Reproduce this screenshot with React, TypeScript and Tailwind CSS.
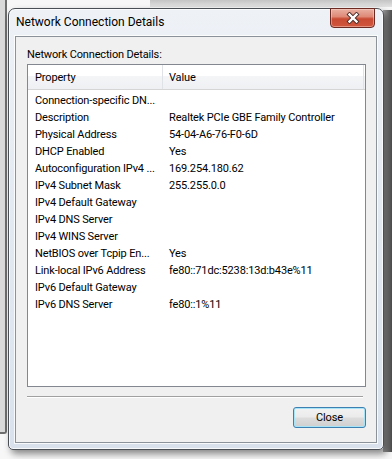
import React from "react";

const rows: [string, string][] = [
  ["Connection-specific DN...", ""],
  ["Description", "Realtek PCIe GBE Family Controller"],
  ["Physical Address", "54-04-A6-76-F0-6D"],
  ["DHCP Enabled", "Yes"],
  ["Autoconfiguration IPv4 ...", "169.254.180.62"],
  ["IPv4 Subnet Mask", "255.255.0.0"],
  ["IPv4 Default Gateway", ""],
  ["IPv4 DNS Server", ""],
  ["IPv4 WINS Server", ""],
  ["NetBIOS over Tcpip En...", "Yes"],
  ["Link-local IPv6 Address", "fe80::71dc:5238:13d:b43e%11"],
  ["IPv6 Default Gateway", ""],
  ["IPv6 DNS Server", "fe80::1%11"],
];

function CloseGlyph() {
  return (
    <svg width="14" height="12" viewBox="0 0 14 12">
      <path d="M3.5 2.5 L10.5 9.5 M10.5 2.5 L3.5 9.5" stroke="#4a2a26" strokeWidth="4.2" strokeLinecap="square" fill="none" />
      <path d="M3.5 2.5 L10.5 9.5 M10.5 2.5 L3.5 9.5" stroke="#ffffff" strokeWidth="2.4" strokeLinecap="square" fill="none" />
    </svg>
  );
}

export default function App() {
  return (
    <div className="relative h-[459px] w-[392px] overflow-hidden bg-[#f7f7f7] font-['Roboto',sans-serif] text-black">
      {/* desktop: parent window behind */}
      <div className="absolute left-0 top-0 h-[434px] w-[7px] rounded-br-[3px] border-r-2 border-b-2 border-[#6e6e6e] bg-[#dadada]" />
      <div className="absolute left-[150px] top-0 h-[7px] w-[242px] bg-gradient-to-b from-[#c4c4c4] to-[#e2e2e2]" />
      <div className="absolute right-0 top-[10px] h-[442px] w-[9px] bg-gradient-to-r from-[#a8a8a8] to-[#4c4c4c]" />

      {/* dialog window */}
      <div className="absolute left-[8px] top-[8px] flex h-[442px] w-[376px] flex-col rounded-t-[7px] rounded-b-[5px] border border-[#4a4f56] bg-gradient-to-b from-[#eef2f7] via-[#e3e9f1] to-[#d9e2ec] shadow-[inset_0_0_0_1px_rgba(255,255,255,0.75),3px_4px_7px_rgba(0,0,0,0.45)]">
        {/* title bar */}
        <div className="flex h-[27px] items-start justify-between">
          <div className="pl-[7px] pt-[6px] text-[12px] leading-[15px] text-black">Network Connection Details</div>
          <div className="-mt-[1px] mr-[8px] flex h-[20px] w-[45px] items-center justify-center rounded-b-[4px] border border-[#6d2a22] bg-[linear-gradient(to_bottom,#eab0a3_0%,#de8a77_42%,#c94a33_55%,#d0563c_100%)] shadow-[inset_0_0_0_1px_rgba(255,220,210,0.45)]">
            <CloseGlyph />
          </div>
        </div>

        {/* client area */}
        <div className="mx-[6px] mb-[6px] flex flex-1 flex-col border border-[#8b9299] bg-[#f0f0f0] shadow-[0_0_0_1px_rgba(255,255,255,0.8)]">
          <div className="ml-[11px] mt-[10px] h-[16px] text-[11px] leading-[16px] tracking-[-0.15px]">Network Connection Details:</div>

          {/* list view */}
          <div className="ml-[11px] mr-[10px] mt-[1px] flex h-[323px] flex-col border border-[#828790] bg-white text-[11px] tracking-[-0.15px]">
            <div className="flex h-[25px] border-b border-[#d5d5d5] bg-[linear-gradient(to_bottom,#ffffff_0%,#ffffff_45%,#f4f5f7_46%,#eff0f3_100%)]">
              <div className="flex w-[134px] items-center pl-[7px] pt-[1px] leading-[16px] text-[#000]">Property</div>
              <div className="w-px bg-[#dfe3e8]" />
              <div className="flex w-[201px] items-center border-r border-[#dfe3e8] pl-[6px] pt-[1px] leading-[16px] text-[#000]">Value</div>
            </div>
            <div className="flex flex-col pt-[2px]">
              {rows.map(([k, v]) => (
                <div key={k} className="flex h-[17px] leading-[17px]">
                  <div className="w-[135px] whitespace-nowrap pl-[7px]">{k}</div>
                  <div className="whitespace-nowrap pl-[6px]">{v}</div>
                </div>
              ))}
            </div>
          </div>

          {/* separator */}
          <div className="ml-[11px] mr-[13px] mt-[9px] h-[2px] border-t border-b border-t-[#a0a0a0] border-b-[#ffffff]" />

          {/* close button */}
          <div className="mr-[10px] mt-[9px] flex justify-end">
            <div className="flex h-[21px] w-[73px] items-center justify-center rounded-[3px] border border-[#3c7fb1] bg-[linear-gradient(to_bottom,#f2f2f2_0%,#ebebeb_48%,#dddddd_52%,#cfcfcf_100%)] text-[11px] leading-[16px] tracking-[-0.15px] shadow-[inset_0_0_0_1px_#a8e4f7]">
              Close
            </div>
          </div>
        </div>
      </div>
    </div>
  );
}
